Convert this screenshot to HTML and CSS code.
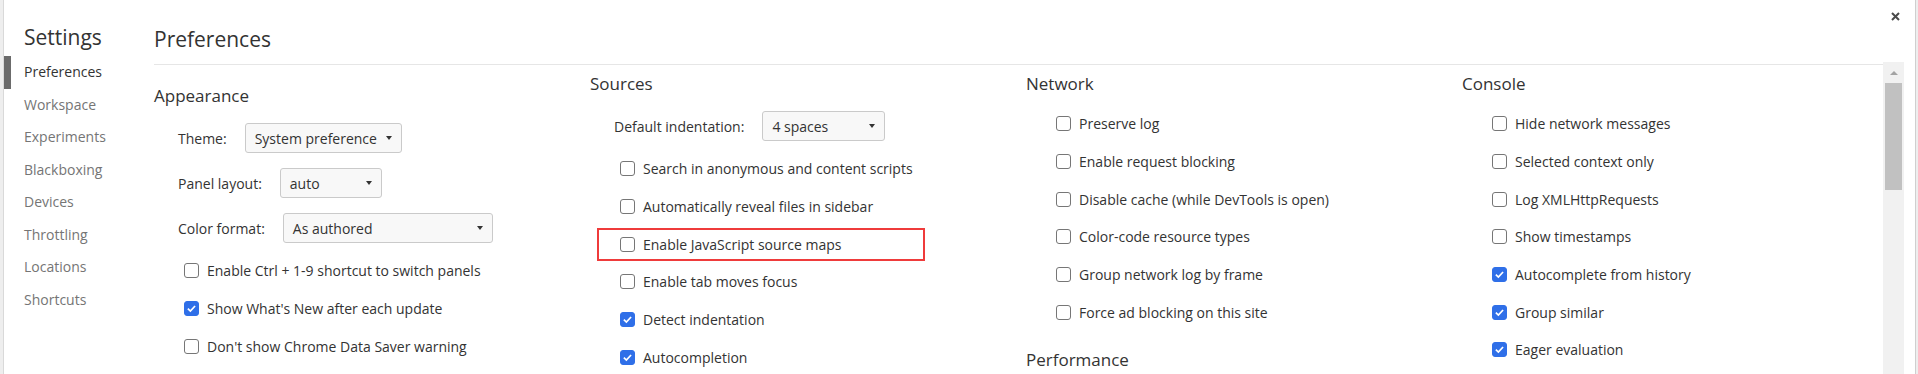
FILE: index.html
```html
<!DOCTYPE html>
<html lang="en">

<head>
    <meta charset="UTF-8">
    <meta name="viewport" content="width=device-width, initial-scale=1.0">
    <title>Settings</title>
    <link rel="stylesheet" href="styles.css">
</head>

<body>
    <div class="window">
        <div class="edge-left"></div>
        <div class="dialog">
            <!-- Menu de gauche -->
            <nav class="sidebar">
                <h1 class="sidebar-title">Settings</h1>
                <div class="tab selected">Preferences</div>
                <div class="tab">Workspace</div>
                <div class="tab">Experiments</div>
                <div class="tab">Blackboxing</div>
                <div class="tab">Devices</div>
                <div class="tab">Throttling</div>
                <div class="tab">Locations</div>
                <div class="tab">Shortcuts</div>
            </nav>

            <!-- Contenu principal -->
            <div class="main">
                <div class="main-header">
                    <h2>Preferences</h2>
                </div>
                <div class="columns">
                    <div class="column offset">
                        <h3 class="section-title">Appearance</h3>
                        <div class="select-row">
                            <label>Theme:</label>
                            <div class="select" style="width: 157px;"><span>System preference</span><i class="arrow"></i></div>
                        </div>
                        <div class="select-row">
                            <label>Panel layout:</label>
                            <div class="select" style="width: 102px;"><span>auto</span><i class="arrow"></i></div>
                        </div>
                        <div class="select-row">
                            <label>Color format:</label>
                            <div class="select" style="width: 210px;"><span>As authored</span><i class="arrow"></i></div>
                        </div>
                        <div class="check-list">
                            <div class="check-row"><span class="box"></span>Enable Ctrl + 1-9 shortcut to switch panels</div>
                            <div class="check-row"><span class="box checked"><svg viewBox="0 0 15 15"><polyline points="3.3,7.6 6.2,10.4 11.6,4.6"/></svg></span>Show What's New after each update</div>
                            <div class="check-row"><span class="box"></span>Don't show Chrome Data Saver warning</div>
                        </div>
                    </div>

                    <div class="column">
                        <h3 class="section-title">Sources</h3>
                        <div class="select-row">
                            <label>Default indentation:</label>
                            <div class="select" style="width: 123px;"><span>4 spaces</span><i class="arrow"></i></div>
                        </div>
                        <div class="check-list">
                            <div class="check-row"><span class="box"></span>Search in anonymous and content scripts</div>
                            <div class="check-row"><span class="box"></span>Automatically reveal files in sidebar</div>
                            <div class="check-row highlight"><span class="box"></span>Enable JavaScript source maps</div>
                            <div class="check-row"><span class="box"></span>Enable tab moves focus</div>
                            <div class="check-row"><span class="box checked"><svg viewBox="0 0 15 15"><polyline points="3.3,7.6 6.2,10.4 11.6,4.6"/></svg></span>Detect indentation</div>
                            <div class="check-row"><span class="box checked"><svg viewBox="0 0 15 15"><polyline points="3.3,7.6 6.2,10.4 11.6,4.6"/></svg></span>Autocompletion</div>
                        </div>
                    </div>

                    <div class="column">
                        <h3 class="section-title">Network</h3>
                        <div class="check-list">
                            <div class="check-row"><span class="box"></span>Preserve log</div>
                            <div class="check-row"><span class="box"></span>Enable request blocking</div>
                            <div class="check-row"><span class="box"></span>Disable cache (while DevTools is open)</div>
                            <div class="check-row"><span class="box"></span>Color-code resource types</div>
                            <div class="check-row"><span class="box"></span>Group network log by frame</div>
                            <div class="check-row"><span class="box"></span>Force ad blocking on this site</div>
                        </div>
                        <h3 class="section-title next">Performance</h3>
                    </div>

                    <div class="column">
                        <h3 class="section-title">Console</h3>
                        <div class="check-list">
                            <div class="check-row"><span class="box"></span>Hide network messages</div>
                            <div class="check-row"><span class="box"></span>Selected context only</div>
                            <div class="check-row"><span class="box"></span>Log XMLHttpRequests</div>
                            <div class="check-row"><span class="box"></span>Show timestamps</div>
                            <div class="check-row"><span class="box checked"><svg viewBox="0 0 15 15"><polyline points="3.3,7.6 6.2,10.4 11.6,4.6"/></svg></span>Autocomplete from history</div>
                            <div class="check-row"><span class="box checked"><svg viewBox="0 0 15 15"><polyline points="3.3,7.6 6.2,10.4 11.6,4.6"/></svg></span>Group similar</div>
                            <div class="check-row"><span class="box checked"><svg viewBox="0 0 15 15"><polyline points="3.3,7.6 6.2,10.4 11.6,4.6"/></svg></span>Eager evaluation</div>
                        </div>
                    </div>
                </div>
            </div>

            <!-- Fermeture et barre de défilement -->
            <div class="scroll-col">
                <div class="close">
                    <svg width="9" height="9" viewBox="0 0 9 9"><path d="M1 1 L8 8 M8 1 L1 8"/></svg>
                </div>
                <div class="scrollbar">
                    <i class="scroll-arrow"></i>
                    <div class="scroll-thumb"></div>
                </div>
            </div>
        </div>
        <div class="edge-right"></div>
    </div>
</body>

</html>
```

FILE: styles.css
```css
body {
    margin: 0;
    padding: 0;
    font-family: "Open Sans", "Noto Sans", sans-serif;
    font-size: 14px;
    color: #333333;
    background-color: #ffffff;
    overflow: hidden;
}

.window {
    display: flex;
    width: 1918px;
    height: 374px;
}

.edge-left {
    width: 3px;
    background-color: #eeeeee;
}

.edge-right {
    width: 2px;
    background-color: #eeeeee;
}

.dialog {
    flex: 1;
    display: flex;
    border-left: 1px solid #d9d9d9;
    border-right: 1px solid #cfcfcf;
}

.sidebar {
    width: 150px;
    flex-shrink: 0;
}

.sidebar-title {
    margin: 23px 0 5px 20px;
    font-size: 21px;
    line-height: 28px;
    font-weight: normal;
    color: #333333;
}

.tab {
    height: 32.5px;
    line-height: 32.5px;
    padding-left: 20px;
    color: #757575;
}

.tab.selected {
    color: #333333;
    box-shadow: inset 7px 0 0 #6b6b6b;
}

.main {
    flex: 1;
    min-width: 0;
}

.main-header {
    height: 65px;
    box-sizing: border-box;
    padding-top: 25px;
    border-bottom: 1px solid #e6e6e6;
}

.main-header h2 {
    margin: 0;
    font-size: 21px;
    line-height: 28px;
    font-weight: normal;
}

.columns {
    display: grid;
    grid-template-columns: repeat(3, 436px) 1fr;
}

.column {
    padding-top: 7px;
}

.column.offset {
    padding-top: 19px;
}

.section-title {
    margin: 0;
    font-size: 17px;
    line-height: 24px;
    font-weight: normal;
}

.section-title.next {
    margin-top: 17px;
}

.select-row {
    display: flex;
    align-items: center;
    height: 30px;
    margin-top: 15px;
    padding-left: 24px;
}

.select-row label {
    margin-right: 18px;
}

.select {
    height: 30px;
    box-sizing: border-box;
    display: flex;
    align-items: center;
    justify-content: space-between;
    padding: 0 9px;
    background-color: #f8f8f8;
    border: 1px solid #cacaca;
    border-radius: 3px;
}

.arrow {
    width: 0;
    height: 0;
    border-left: 3.5px solid transparent;
    border-right: 3.5px solid transparent;
    border-top: 4px solid #333333;
}

.check-list {
    margin-top: 9px;
}

.check-row {
    position: relative;
    display: flex;
    align-items: center;
    height: 37.7px;
    padding-left: 30px;
    white-space: nowrap;
}

.box {
    width: 15px;
    height: 15px;
    box-sizing: border-box;
    margin-right: 8px;
    border: 1px solid #767676;
    border-radius: 3px;
    flex-shrink: 0;
}

.box.checked {
    background-color: #2f6fe8;
    border-color: #2f6fe8;
}

.box svg {
    display: block;
    width: 13px;
    height: 13px;
    fill: none;
    stroke: #ffffff;
    stroke-width: 2;
}

/* cadre rouge d'annotation */
.highlight::after {
    content: "";
    position: absolute;
    top: 3px;
    left: 7px;
    width: 328px;
    height: 33px;
    box-sizing: border-box;
    border: 2px solid #ef3b3b;
}

.scroll-col {
    width: 21px;
    margin-right: 11px;
    display: flex;
    flex-direction: column;
    flex-shrink: 0;
}

.close {
    height: 62px;
    box-sizing: border-box;
    display: flex;
    justify-content: flex-end;
    padding: 12px 4px 0 0;
}

.close svg {
    stroke: #4a4a4a;
    stroke-width: 2;
}

.scrollbar {
    flex: 1;
    display: flex;
    flex-direction: column;
    align-items: center;
    background-color: #f1f1f1;
}

.scroll-arrow {
    width: 0;
    height: 0;
    margin-top: 9px;
    border-left: 4.5px solid transparent;
    border-right: 4.5px solid transparent;
    border-bottom: 4px solid #a3a3a3;
}

.scroll-thumb {
    width: 17px;
    height: 107px;
    margin-top: 8px;
    background-color: #c1c1c1;
}
```
